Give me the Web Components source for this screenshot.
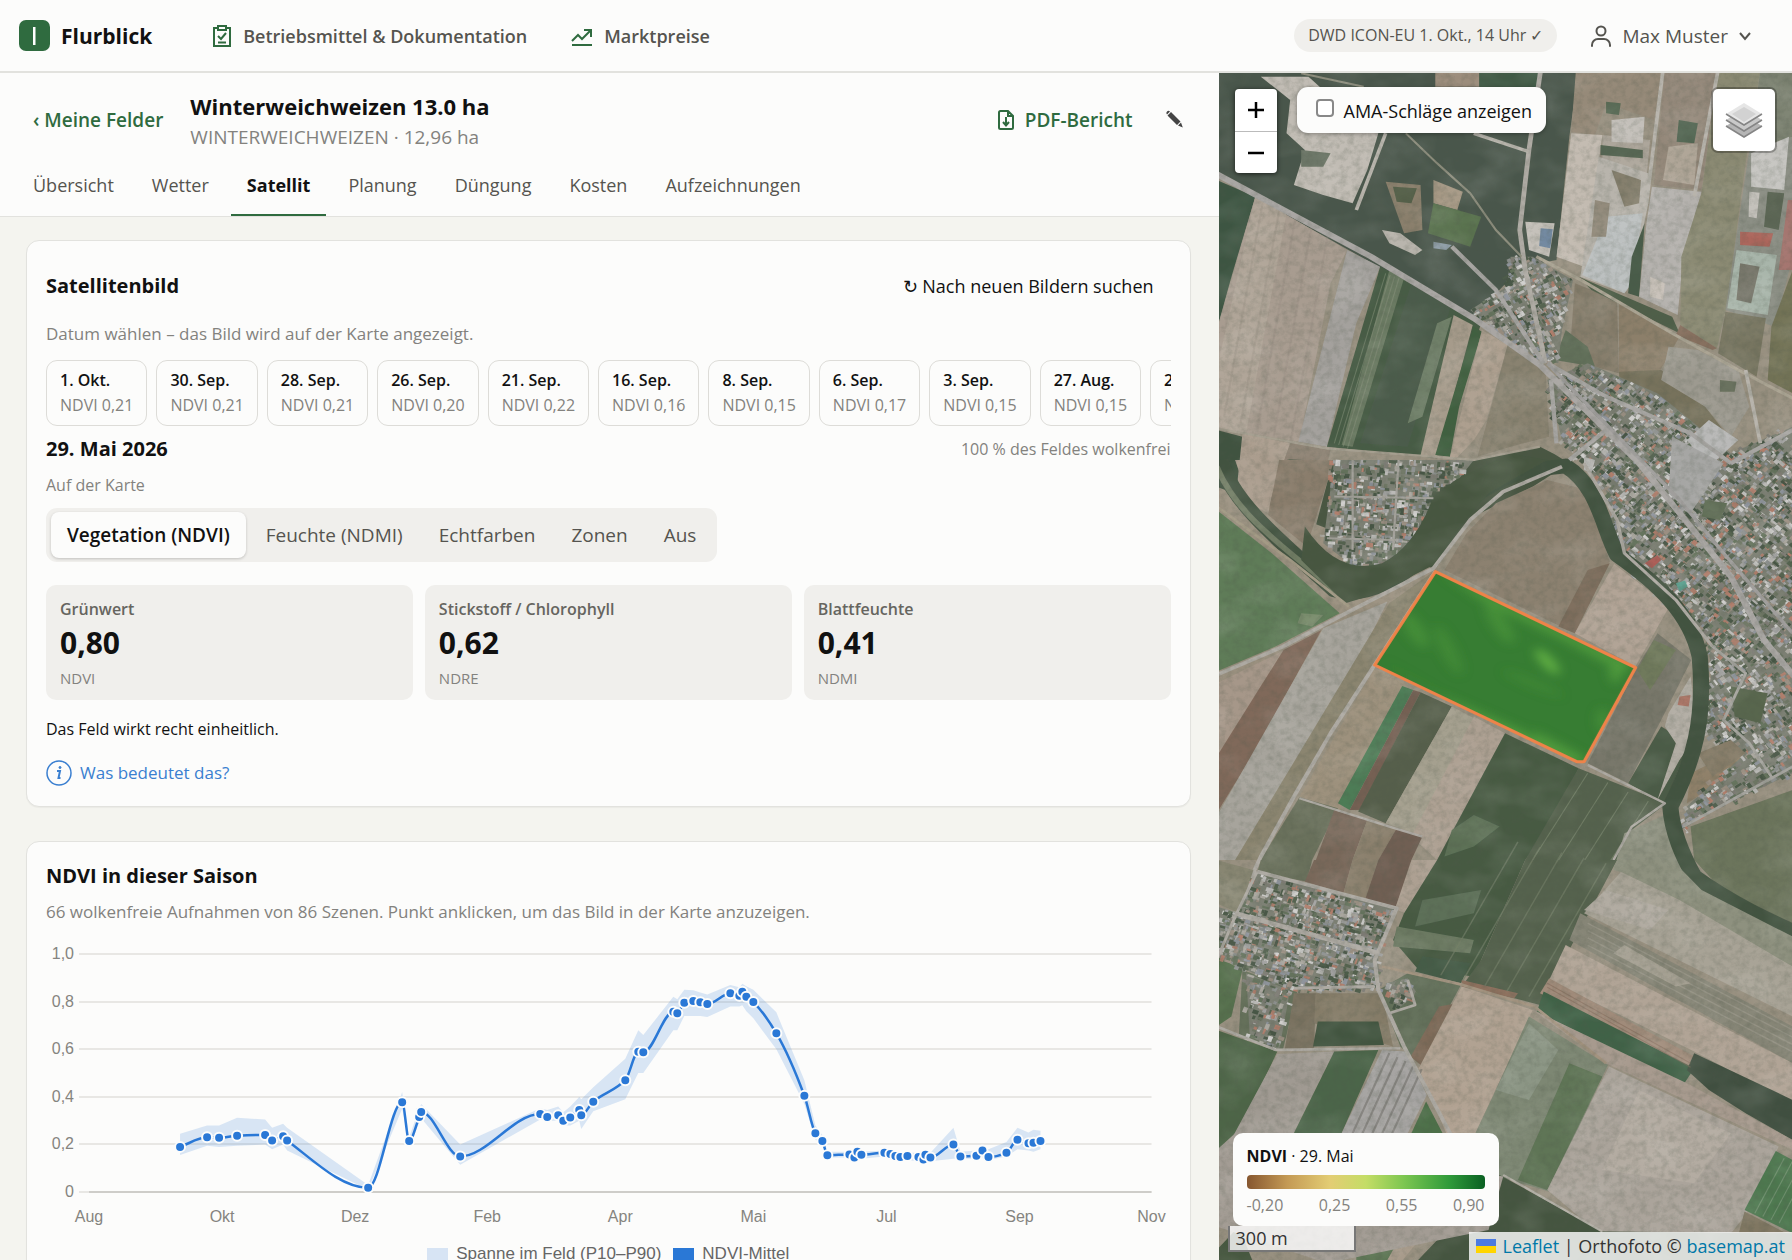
<!DOCTYPE html>
<html lang="de">
<head>
<meta charset="utf-8">
<meta name="viewport" content="width=device-width, initial-scale=1">
<title>Flurblick – Satellit</title>
<style>
  html, body { margin: 0; height: 100%; }
  body {
    font-family: "Open Sans", "Noto Sans", sans-serif;
    font-size: 18px; line-height: 24px; color: #111;
    background: #f4f4ef; overflow: hidden;
    --surface: #fcfcfb; --line: #e2e2de; --muted: #83827e; --mid: #55544f;
    --green: #2f6b3f; --blue: #3a7fd0; --tile: #f0efec;
  }
</style>
</head>
<body>
<flur-app></flur-app>

<script>
const base = `*{box-sizing:border-box}button,input{font:inherit;color:inherit}button{border:0;background:none;padding:0;cursor:pointer}a{text-decoration:none;color:inherit}svg{display:block;flex:none}h1,h2,h3,p,dl,dd,dt{margin:0;font-weight:inherit;font-size:inherit}`;

class Base extends HTMLElement {
  constructor() {
    super();
    const t = document.createElement('template');
    t.innerHTML = `<style>${base}${this.css()}</style>${this.html()}`;
    this.attachShadow({ mode: 'open' }).append(t.content.cloneNode(true));
  }
  css() { return ''; }
  html() { return '<slot></slot>'; }
}

/* ---------- header ---------- */
class AppHeader extends Base {
  css() { return `
    :host{display:flex;align-items:center;height:73px;flex:none;padding:0 40px 0 19px;background:var(--surface);border-bottom:2px solid var(--line);color:var(--mid)}
    .brand{display:flex;align-items:center;gap:11px;font-weight:700;font-size:21px;color:#111;margin-right:59px}
    nav{display:flex;gap:43px;flex:1;font-weight:600}
    nav a{display:flex;align-items:center;gap:10px}
    nav svg{color:var(--green)}
    .chip{background:var(--tile);border-radius:17px;padding:4px 14px 5px;font-size:16px;margin-right:33px}
    button{display:flex;align-items:center;gap:10px;font-size:19px}`; }
  html() { return `
    <a class="brand" href="#"><svg width="31" height="31" viewBox="0 0 31 31" aria-hidden="true"><rect width="31" height="31" rx="7" fill="#2f6b3f"/><rect x="14" y="7" width="2.5" height="18" fill="#fff"/></svg>Flurblick</a>
    <nav>
      <a href="#"><svg width="22" height="24" viewBox="0 0 22 24" fill="none" stroke="currentColor" stroke-width="2"><path d="M7 4H3v18h16V4h-4"/><rect x="7" y="2" width="8" height="4"/><path d="M7 12l3 3 5-6M7 18.500h8"/></svg>Betriebsmittel &amp; Dokumentation</a>
      <a href="#"><svg width="24" height="24" viewBox="0 0 24 24" fill="none" stroke="currentColor" stroke-width="2"><path d="M2 17l6-6 4 4 8-8M14 6h7v7M2 21h20"/></svg>Marktpreise</a>
    </nav>
    <span class="chip">DWD ICON-EU 1. Okt., 14 Uhr ✓</span>
    <button type="button"><svg width="22" height="24" viewBox="0 0 22 24" fill="none" stroke="currentColor" stroke-width="2" stroke-linecap="round"><circle cx="11" cy="7" r="4.500"/><path d="M2 22v-1a6 6 0 0 1 6-6h6a6 6 0 0 1 6 6v1"/></svg>Max Muster<svg width="14" height="14" viewBox="0 0 14 14" fill="none" stroke="currentColor" stroke-width="2"><path d="M2 4l5 6 5-6"/></svg></button>`; }
}
customElements.define('app-header', AppHeader);

/* ---------- field header with tabs ---------- */
class FieldHeader extends Base {
  css() { return `
    :host{display:block;background:var(--surface);border-bottom:1px solid var(--line)}
    .top{display:flex;align-items:center;padding:16px 34px 0 33px}
    .back,.pdf{color:var(--green);font-weight:600;font-size:19px}
    .titles{flex:1;margin-left:27px}
    h1{font-size:22px;line-height:34px;font-weight:700}
    .titles p{line-height:28px;color:var(--muted);font-size:19px}
    .pdf{display:flex;align-items:center;gap:10px;margin-right:32px}
    .tabs{display:flex;gap:6px;padding:0 17px}
    .tabs a{padding:22px 16px 17px;color:var(--mid);border-bottom:2px solid transparent}
    .tabs a[aria-current]{font-weight:700;color:#111;border-color:var(--green)}`; }
  html() { return `
    <div class="top">
      <a class="back" href="#">‹ Meine Felder</a>
      <div class="titles"><h1>Winterweichweizen 13.0 ha</h1><p>WINTERWEICHWEIZEN · 12,96 ha</p></div>
      <button class="pdf" type="button"><svg width="18" height="22" viewBox="0 0 18 22" fill="none" stroke="currentColor" stroke-width="2"><path d="M2 3.500A1.500 1.500 0 0 1 3.500 2H11l5 5v11.500a1.500 1.500 0 0 1-1.500 1.500h-11A1.500 1.500 0 0 1 2 18.500zM11 2v5h5M9 8v8M6 13l3 3.500 3-3.500"/></svg>PDF-Bericht</button>
      <button type="button" aria-label="Bearbeiten"><svg width="20" height="20" viewBox="0 0 20 20" fill="#444"><path d="M2.500 5.500l3.500-3.500 9.500 9.500-3.500 3.500zM13 15.500l3-3 1.800 5zM2 4.500a2 2 0 0 1 3-3z"/></svg></button>
    </div>
    <nav class="tabs"><a href="#">Übersicht</a><a href="#">Wetter</a><a href="#" aria-current="page">Satellit</a><a href="#">Planung</a><a href="#">Düngung</a><a href="#">Kosten</a><a href="#">Aufzeichnungen</a></nav>`; }
}
customElements.define('field-header', FieldHeader);

/* ---------- card ---------- */
class UiCard extends Base {
  css() { return `:host{display:block;background:var(--surface);border:1px solid var(--line);border-radius:13px;padding:20px 19px;box-shadow:0 1px 1px #0000000a}`; }
}
customElements.define('ui-card', UiCard);

/* ---------- scene picker ---------- */
class DateStrip extends Base {
  css() { return `
    :host{display:flex;gap:9px;overflow:hidden}
    button{flex:none;height:66px;padding:0 13px;border:1px solid #dddcd8;border-radius:11px;text-align:left;line-height:25px;font-size:16px;white-space:nowrap}
    b{display:block;font-weight:600}
    span{color:var(--muted)}`; }
  html() {
    return [['1. Okt.','0,21'],['30. Sep.','0,21'],['28. Sep.','0,21'],['26. Sep.','0,20'],['21. Sep.','0,22'],['16. Sep.','0,16'],['8. Sep.','0,15'],['6. Sep.','0,17'],['3. Sep.','0,15'],['27. Aug.','0,15'],['24. Aug.','0,15']]
      .map(([d, v]) => `<button type="button"><b>${d}</b><span>NDVI ${v}</span></button>`).join('');
  }
}
customElements.define('date-strip', DateStrip);

/* ---------- layer switch ---------- */
class LayerSwitch extends Base {
  css() { return `
    :host{display:inline-flex;gap:4px;padding:4px 5px;border-radius:11px;background:var(--tile)}
    button{height:46px;padding:0 16px;border-radius:8px;color:var(--mid);font-size:19px}
    button[aria-pressed=true]{background:var(--surface);color:#111;font-weight:600;box-shadow:0 1px 3px #0003}`; }
  html() { return ['Vegetation (NDVI)','Feuchte (NDMI)','Echtfarben','Zonen','Aus'].map((t, i) => `<button type="button" aria-pressed="${i === 0}">${t}</button>`).join(''); }
}
customElements.define('layer-switch', LayerSwitch);

/* ---------- metric ---------- */
class MetricTile extends Base {
  css() { return `
    :host{display:block;background:var(--tile);border-radius:10px;padding:12px 14px 8px}
    .l{font-size:16px;font-weight:600;color:#66655f;line-height:24px}
    .v{font-size:30px;font-weight:700;line-height:44px}
    .c{font-size:15px;color:var(--muted);line-height:27px}`; }
  html() { return `<div class="l"><slot name="label"></slot></div><div class="v"><slot></slot></div><div class="c"><slot name="code"></slot></div>`; }
}
customElements.define('metric-tile', MetricTile);

/* ---------- season chart ---------- */
/* x, mean, P90, P10 */
const season = [[134,.19,.245,.156],[161,.23,.28,.195],[173,.228,.28,.19],[191,.237,.312,.195],[219,.24,.305,.2],[226,.217,.27,.18],[237,.235,.287,.2],[241,.217,.27,.175],[322,.018,.03,.01],[356,.377,.42,.35],[363,.215,.23,.2],[373,.315,.35,.29],[375,.337,.37,.31],[414,.15,.2,.115],[494,.328,.352,.305],[501,.315,.345,.3],[512,.323,.36,.3],[517,.3,.335,.28],[524,.313,.36,.28],[533,.345,.4,.3],[535,.323,.39,.265],[547,.38,.44,.34],[579,.47,.56,.39],[592,.59,.68,.5],[597,.587,.66,.5],[627,.757,.82,.68],[631,.751,.81,.68],[638,.795,.85,.74],[647,.803,.848,.74],[654,.797,.838,.74],[661,.79,.83,.735],[684,.835,.87,.78],[693,.825,.86,.78],[696,.842,.875,.785],[700,.82,.865,.76],[707,.798,.85,.73],[730,.667,.755,.6],[758,.405,.47,.37],[769,.247,.28,.22],[776,.215,.24,.2],[781,.155,.17,.145],[803,.158,.17,.145],[808,.145,.17,.135],[811,.17,.18,.14],[815,.157,.17,.14],[838,.165,.175,.15],[844,.16,.175,.145],[849,.152,.17,.14],[854,.148,.165,.135],[861,.152,.165,.135],[872,.148,.165,.13],[877,.137,.165,.13],[879,.157,.165,.13],[884,.145,.165,.13],[907,.2,.27,.14],[914,.15,.17,.14],[930,.153,.175,.14],[936,.175,.2,.145],[942,.147,.18,.135],[960,.165,.21,.15],[971,.22,.27,.18],[982,.205,.25,.175],[987,.207,.262,.17],[994,.215,.258,.18]];
const yOf = v => 258 - v * 238;
function smooth(p) {
  const n = p.length, d = [], m = [];
  for (let i = 0; i < n - 1; i++) d.push((p[i+1][1] - p[i][1]) / (p[i+1][0] - p[i][0]));
  for (let i = 0; i < n; i++) m.push(i === 0 ? d[0] : i === n - 1 ? d[n-2] : d[i-1] * d[i] <= 0 ? 0 : 2 * d[i-1] * d[i] / (d[i-1] + d[i]));
  let s = '';
  for (let i = 0; i < n - 1; i++) {
    const h = (p[i+1][0] - p[i][0]) / 3;
    s += `C${p[i][0] + h} ${p[i][1] + m[i] * h} ${p[i+1][0] - h} ${p[i+1][1] - m[i+1] * h} ${p[i+1][0]} ${p[i+1][1]}`;
  }
  return s;
}
class NdviChart extends Base {
  css() { return `
    :host{display:block;font-family:"Liberation Sans",Arial,sans-serif;color:#666}
    svg{width:100%;height:auto}
    text{font-size:16px;fill:#85847f}
    ul{display:flex;justify-content:center;gap:12px;margin:0;padding:8px 0 0;list-style:none;font-size:17px}
    li{display:flex;align-items:center;gap:8px}
    i{width:21px;height:12px;background:#d7e4f4}
    i.m{background:#2a78d6}`; }
  html() {
    const pts = season.map(r => [r[0], yOf(r[1])]);
    const up = season.map(r => [r[0], yOf(r[2])]), lo = season.map(r => [r[0], yOf(r[3])]);
    const band = 'M' + up.concat(lo.reverse()).map(a => a.join(' ')).join('L') + 'Z';
    const grid = ['0','0,2','0,4','0,6','0,8','1,0'].map((t, i) => { const y = Math.round(yOf(i / 5)); return `<path d="M33 ${y}H1105" stroke="#e2e1dd" stroke-width="1.500"/><text x="28" y="${y + 5}" text-anchor="end">${t}</text>`; }).join('');
    const months = ['Aug','Okt','Dez','Feb','Apr','Mai','Jul','Sep','Nov'].map((t, i) => `<text x="${43 + Math.round(i * 132.8)}" y="288" text-anchor="middle">${t}</text>`).join('');
    return `<svg viewBox="0 0 1124 300" role="img" aria-label="NDVI-Verlauf" style="overflow:visible">${grid}
      <path d="M43 258H1105" stroke="#c6c5c1" stroke-width="1.500"/>
      <path d="${band}" fill="#2a78d6" fill-opacity=".17"/>
      <path d="M${pts[0].join(' ')}${smooth(pts)}" fill="none" stroke="#2a78d6" stroke-width="2.500"/>
      <g fill="#2a78d6" stroke="#fcfcfb" stroke-width="2">${pts.map(p => `<circle cx="${p[0]}" cy="${p[1]}" r="5"/>`).join('')}</g>${months}</svg>
      <ul><li><i></i>Spanne im Feld (P10–P90)</li><li><i class="m"></i>NDVI-Mittel</li></ul>`;
  }
}
customElements.define('ndvi-chart', NdviChart);

/* ---------- orthophoto ---------- */
let seed = 7;
const rnd = () => (seed = (seed * 16807) % 2147483647) / 2147483647;
const inside = (x, y, p) => { let c = false; for (let i = 0, j = p.length - 1; i < p.length; j = i++) if ((p[i][1] > y) !== (p[j][1] > y) && x < (p[j][0] - p[i][0]) * (y - p[i][1]) / (p[j][1] - p[i][1]) + p[i][0]) c = !c; return c; };
const P = s => s.split(' ').map(q => q.split(',').map(Number));
function village(str, n, ang) {
  const p = P(str), xs = p.map(a => a[0]), ys = p.map(a => a[1]);
  const x0 = Math.min(...xs), x1 = Math.max(...xs), y0 = Math.min(...ys), y1 = Math.max(...ys);
  const col = ['#b9b8b5','#a3a3a2','#8d908e','#cfcecc','#4d5b4a','#55634f','#465544','#6d7563','#9b8f82','#b07e6c','#8f949c','#aaa79f','#7e7c74','#65735d'];
  let s = `<polygon points="${str}" fill="#7b7f73"/>`;
  for (let i = 0; i < n * 2; i++) {
    const x = x0 + rnd() * (x1 - x0), y = y0 + rnd() * (y1 - y0);
    if (!inside(x, y, p)) continue;
    const w = 6 + rnd() * 15, h = 6 + rnd() * 8;
    s += `<rect x="${x | 0}" y="${y | 0}" width="${w | 0}" height="${h | 0}" fill="${col[rnd() * col.length | 0]}" transform="rotate(${ang + (rnd() > .5 ? 90 : 0)} ${x | 0} ${y | 0})"/>`;
  }
  return s;
}
const poly = list => list.map(([f, p]) => `<polygon fill="${f}" points="${p}"/>`).join('');
const road = (d, w = 11, c = '#aeaaa3') => `<path d="${d}" fill="none" stroke="${c}" stroke-width="${w}" stroke-linejoin="round"/>`;
const lines = (x0, y0, x1, y1, dx, dy, n, c, w, o = .5) => Array.from({ length: n }, (_, i) => `<path d="M${x0 + dx * i} ${y0 + dy * i}L${x1 + dx * i} ${y1 + dy * i}" stroke="${c}" stroke-width="${w}" opacity="${o}"/>`).join('');

const north = () => poly([
  ['#4a574b','0,0 985,0 960,200 925,570 830,590 700,740 440,590 100,380 0,310'],
  ['#c1bcb4','120,20 250,20 330,100 440,190 410,300 370,400 290,375 210,345 240,240 190,190 200,90'],
  ['#6d7767','230,240 310,250 290,290 230,290'],
  ['#9c8d7c','595,0 715,0 715,50 595,50'],['#3f5a45','715,0 878,0 872,70 715,50'],
  ['#8a7f6c','460,335 555,345 560,480 510,490'],['#546049','480,350 545,355 530,400 490,395'],
  ['#a49682','590,330 670,365 655,420 590,400'],['#5a7350','590,400 720,440 690,530 575,490'],
  ['#b9b5ad','450,480 500,490 560,540 540,555 470,520'],['#8797a2','590,515 640,525 625,540 590,535'],
  ['#c3bfb8','840,455 920,460 905,560 850,540'],['#7188a0','882,475 915,478 908,535 878,528'],
  ['#968a79','978,0 1215,0 1190,150 1060,100 1030,195 965,185'],['#586a54','1060,95 1100,100 1095,135 1060,130'],
  ['#c3bbb1','965,190 1050,195 1025,400 1000,590 925,560'],
  ['#ada69b','1050,195 1180,210 1170,320 1050,270'],['#c2beb8','1075,150 1165,140 1160,220 1075,215'],
  ['#566652','1045,225 1160,240 1160,265 1045,255'],
  ['#b8b4ac','1040,260 1175,310 1175,400 1130,640 1110,670 990,620'],['#bcc0c0','1060,440 1160,430 1130,640 1110,670 995,615'],
  ['#857f6d','1075,300 1155,330 1150,400 1110,410'],['#938b7b','1030,390 1070,400 1060,500 1020,500'],
  ['#4a5c49','1130,560 1165,460 1150,680 1120,670'],
  ['#b5b2ae','1185,350 1320,365 1270,560 1255,735 1150,680 1170,460'],['#c9c2ba','1180,620 1220,640 1215,690 1180,680'],
  ['#94887a','1220,0 1365,0 1320,360 1190,345'],['#4f6450','1258,150 1310,160 1300,220 1252,215'],['#b0a698','1230,230 1310,220 1300,345 1215,330'],
  ['#8b8a73','1365,0 1480,0 1445,240 1425,400 1390,700 1362,835 1262,765 1265,560 1320,370'],
  ['#7c8271','1480,0 1568,0 1568,200 1450,240'],['#8c8f85','1450,240 1568,200 1568,560 1520,770 1385,720 1420,460'],
  ['#c6c5c1','1455,250 1558,200 1545,360 1455,350'],['#5b6654','1500,365 1545,370 1530,480 1490,470'],['#c3c0ba','1450,365 1478,368 1470,445 1448,440'],
  ['#ac665c','1425,485 1515,490 1505,530 1425,525'],['#a5766f','1555,390 1568,390 1568,600 1530,600'],
  ['#a8b5aa','1415,540 1525,555 1500,735 1390,715'],['#77766a','1425,580 1478,590 1455,700 1415,690'],
  ['#777560','1385,725 1495,745 1470,920 1365,850'],['#737357','1510,770 1568,600 1568,970 1500,930'],
  ['#857c6b','975,640 1090,690 1095,910 960,870'],['#8c7f6b','1095,695 1260,800 1200,915 1095,910'],
  ['#4f5f49','985,620 1240,740 1260,790 1020,660'],['#87705f','1262,765 1362,835 1350,840 1250,795'],
  ['#77725c','1095,905 1210,900 1330,1010 1400,1110 1300,1080 1100,990'],
  ['#9d9a90','1230,830 1310,840 1420,900 1450,1010 1400,1100 1330,1010 1210,930'],['#6b725e','1370,930 1415,935 1410,965 1370,965'],
  ['#62705a','950,780 1010,830 1030,890 920,870'],
  ['#3d5543','0,330 105,380 40,620 0,780'],['#a89c90','105,380 355,540 310,640 225,1115 0,1075 0,780'],
  ['#b0a598','105,380 190,430 80,1090 0,1075 0,900'],['#a4a19d','355,540 445,590 380,760 300,1130 222,1115'],
  ['#465c44','445,590 720,760 600,1165 300,1130'],['#6b7a62','470,600 510,625 370,1130 340,1125'],['#4c5b4b','530,640 640,700 520,1130 390,1120'],
  ['#708069','600,760 640,740 560,1040 520,1060'],['#a69b8b','645,735 697,765 600,1165 555,1155'],['#40603f','700,770 722,785 660,1010 635,1160 595,1155'],
  ['#ad9f8f','722,780 792,825 735,1050 700,1110 650,1168 635,1160'],['#898270','792,825 895,895 905,1100 800,1130 710,1160 740,1040'],
  ['#3f5240','0,1080 70,1100 60,1250 0,1300'],['#ab9d8e','70,1090 200,1120 130,1340 55,1250'],['#8b7f70','200,1120 310,1140 245,1430 130,1340'],
]) + lines(125, 400, 20, 1040, 45, 20, 5, '#958b80', 6, .3) + lines(460, 610, 320, 1120, 12, 5, 4, '#8a947f', 3, .5)
  + `<path d="M190 1168Q420 1180 620 1190L880 1130Q920 1150 960 1180L860 1250 700 1340 600 1490 450 1580 330 1600 250 1450 310 1200Z" fill="#485743"/>`
  + village('800,560 860,560 970,630 940,780 930,880 880,870 690,720 790,650', 420, 60);

const middle = () => `<g transform="translate(0 1170)">` + poly([
  ['#9a907f','0,80 600,330 480,600 0,700'],
  ['#ab9d8e','50,0 170,0 140,160 90,130'],['#8a7d6c','170,0 320,0 245,260 140,165'],
  ['#5f7c59','0,150 150,280 335,460 160,560 0,635'],['#7a8d6d','230,460 290,465 260,500 220,490'],
  ['#8c8170','900,60 990,85 1030,170 1070,305 975,520 620,330 680,220 760,130'],['#7d6d5c','1010,330 1070,310 975,520 930,500'],
  ['#b0a294','1082,312 1232,440 1140,620 975,520'],
  ['#a69789','0,670 185,570 60,850 0,900'],['#80695a','182,570 285,510 100,880 0,1060 0,890'],
  ['#a7a49c','290,505 465,425 350,680 60,1200 0,1200 0,1070'],['#8b8570','470,430 590,335 430,610 190,1050 110,1200 50,1200'],
  ['#9d917d','430,625 515,672 335,1050 225,1010'],['#4d7c56','505,678 535,690 362,1050 330,1030'],
  ['#756153','535,690 555,697 390,1050 362,1050'],['#565f4c','555,697 640,740 460,1090 385,1055'],
  ['#a5a08f','640,740 700,775 540,1120 460,1090'],['#ada092','700,770 785,820 600,1200 530,1130'],
  ['#6b715c','225,1012 330,1045 260,1200 120,1200'],['#79675a','320,1050 410,1080 370,1200 270,1200'],['#8a7f6c','410,1080 490,1105 440,1200 370,1200'],['#705f52','490,1105 560,1130 530,1200 440,1200'],
  ['#465a43','785,820 985,925 940,1050 840,1200 600,1200'],['#5d7157','640,1110 700,1065 770,1100 700,1160 620,1190'],
  ['#55624d','985,925 1225,1030 1130,1110 1090,1200 840,1200'],
  ['#78776a','1140,630 1200,520 1292,600 1210,780 1120,970 1010,910'],['#6f7a5b','1145,630 1190,540 1250,570 1180,690'],
  ['#4c5b46','1210,800 1285,850 1220,1035 1120,970'],['#b2ada4','1230,760 1290,650 1310,820 1260,900 1200,1020 1250,850 1220,800'],
  ['#8f8069','1290,940 1400,880 1440,900 1370,970 1280,1030'],['#6c745c','1290,1100 1568,990 1568,1400 1400,1320 1300,1200'],
  ['#8e9180','1110,1120 1230,1060 1250,1180 1320,1300 1080,1230'],
]) + lines(1010, 940, 860, 1200, 55, 28, 4, '#7d8871', 3, .7)
  + village('320,0 700,0 650,70 590,80 560,240 480,320 390,335 290,250', 620, 5)
  + village('1000,10 940,-60 900,-240 1010,-290 1200,-200 1400,-20 1568,-100 1568,420 1568,620 1350,640 1330,520 1100,300 1060,90', 3200, 42)
  + village('1350,600 1568,620 1568,940 1330,1060 1270,1110 1280,1040 1430,890 1330,820', 620, 55)
  + poly([['#c3c3c3','1240,15 1290,20 1260,70 1235,60'],['#b9b8b5','1000,-10 1030,0 1020,40 1000,30'],['#b9b9b8','1280,-60 1340,-120 1420,-60 1340,20'],['#a6a6a4','1240,-70 1380,10 1290,160 1230,100'],['#5ba08f','1250,370 1275,362 1282,380 1260,395'],['#ad5c55','1165,310 1200,285 1210,300 1185,325'],['#ab7466','1260,710 1290,705 1285,740 1255,735'],['#59664e','1400,680 1500,700 1480,790 1410,770'],['#616e56','1330,120 1390,130 1370,180 1320,170'],['#867c68','1310,880 1400,840 1440,880 1350,950']])
  + road('M10 0C40 130 180 250 320 390 C400 420 520 350 585 260 C640 150 720 70 850 30 L950 18 C1040 80 1050 200 1090 285 C1200 370 1290 460 1315 590 C1330 780 1300 900 1235 1040 C1240 1120 1270 1190 1300 1250 C1400 1330 1500 1380 1600 1430', 44, '#435341')
  + road('M0 20C60 180 200 270 330 400', 16, '#6f7b63')
  + `<path d="M240 200Q330 350 450 310 540 260 590 110L650 60 800 -20 900 0 740 100Q640 220 600 310L440 400 350 430 230 300Z" fill="#465641"/>`
  + road('M0 140L200 300 360 440', 8, '#a39a85') + road('M0 645L180 560 360 455 590 325 690 180 780 95 940 20') + road('M595 335L430 615 310 820 210 1010 120 1190 40 1380')
  + road('M225 1015L470 1100 560 1130', 7) + road('M1010 915L1220 1030 1130 1100 1080 1200', 7)
  + road('M370 0L370 270M495 0L480 270M320 110L590 115M300 235L490 240', 6, '#a3a19a')
  + road('M1000 10L1090 180 1110 280 1250 420 1350 560', 9) + road('M1350 560L1440 640 1380 780 1450 850 1510 950M1270 1100L1568 920', 8, '#a5a49e') + '</g>';

const south = () => `<g transform="translate(0 2340)">` + poly([
  ['#888672','0,30 100,60 60,190 0,160'],['#6b715c','120,30 260,30 245,95 110,70'],['#79675a','265,30 370,30 345,130 240,95'],['#8a7f6c','370,30 440,30 405,145 345,130'],['#705f52','440,30 535,30 485,178 405,145'],['#ada092','530,30 605,30 515,190 485,178'],
  ['#465a43','600,30 840,30 700,380 550,360 480,270 510,190'],['#5d7058','560,150 720,120 700,190 540,230'],['#6c7a62','490,230 700,270 690,310 480,290'],
  ['#55624d','840,30 1090,30 880,465 670,405 720,330'],['#455b47','560,320 690,340 665,400 540,365'],
  ['#64705a','440,420 520,370 665,405 550,640 500,590'],['#7e6a58','605,470 655,460 560,650 528,620'],['#b1a292','667,410 860,480 700,860 625,850 550,655'],
  ['#8d6f5d','667,390 820,430 810,445 667,410'],
  ['#56704e','0,320 70,360 40,500 0,530'],['#65705a','70,360 220,420 180,600 60,560'],['#7a7260','210,430 270,430 265,600 185,600'],['#857b68','270,430 450,430 480,590 265,520'],['#43553f','275,515 440,515 455,585 262,590'],
  ['#4d6546','0,540 165,605 60,850 0,960'],['#a09a92','165,612 320,605 210,850 60,850 0,1020 0,950'],['#4b6548','320,605 440,600 340,850 210,850'],
  ['#a6a4a2','450,600 515,605 572,735 520,850 340,850'],['#4d7048','570,755 615,850 530,850'],
  ['#a8a396','1105,60 1260,140 1568,340 1568,500 1000,190'],['#8e917f','1090,30 1240,30 1320,120 1568,260 1568,350 1260,150 1080,55'],
  ['#b0aaa0','1060,120 1230,180 1180,240 1000,180'],['#868576','990,190 1568,530 1568,640 960,270'],['#a39e90','1110,285 1290,400 1250,410 1080,310'],
  ['#b1a496','950,285 1568,640 1568,760 1300,605 905,390'],['#a08b7a','905,385 1300,620 1290,655 880,430'],
  ['#3f6246','890,425 1300,655 1270,705 872,485'],['#415040','1300,610 1568,750 1568,870 1440,790 1340,720 1280,660'],
  ['#a79a8e','860,480 1280,700 1568,870 1568,900 1060,640'],
  ['#7d8773','850,500 1065,645 905,1025 765,980 700,860 760,720'],['#5f7456','960,640 1050,680 900,1020 820,990'],['#8c9685','850,520 930,600 850,750 760,720'],
  ['#aba49b','1068,650 1530,890 1440,1095 1400,1150 1040,1150 900,1020'],['#b4aca2','1150,720 1400,850 1300,1000 1050,960'],
  ['#4d7850','1522,903 1568,930 1568,1150 1437,1080'],['#807762','1437,1085 1568,1160 1568,1240 1400,1240'],
  ['#44543f','770,975 1050,1145 1568,1150 1568,1240 540,1240'],['#46583f','0,1200 60,1130 100,1240 0,1240'],['#5c7553','380,1120 520,1130 460,1240 380,1240'],['#a79a8a','520,1120 580,1130 500,1240 460,1240'],
  ['#a39c94','0,900 60,840 780,980 740,1140 300,1240 0,1130'],
]) + lines(1060, 40, 850, 440, -60, -16, 5, '#727d66', 4, .7) + lines(470, 610, 370, 850, 22, 12, 5, '#716f6a', 6, .6) + lines(1545, 925, 1465, 1090, 22, 10, 4, '#7d9a79', 3, .7)
  + lines(900, 400, 1290, 640, 0, 12, 2, '#7f6656', 3, .5) + lines(1010, 220, 1568, 540, 0, 22, 4, '#a39f92', 4, .5)
  + village('110,65 490,175 440,300 440,415 200,420 0,320 0,170 60,190', 950, 18)
  + village('80,370 200,420 170,600 90,560', 90, 20) + village('460,400 520,385 545,430 490,480', 40, 20)
  + road('M50 190L440 310', 14) + road('M110 65L490 175 430 330 440 420 510 590 640 860') + road('M110 65L50 200 0 330', 8) + road('M0 530L160 600 500 595', 8) + road('M210 415L430 410', 9) + road('M450 350L670 405 865 470 1060 640', 8, '#a3937f') + road('M470 490L540 465 520 390', 8) + road('M780 975L1050 1145', 6, '#b5b1a8') + '</g>';

class FieldMap extends Base {
  css() { return `
    :host{display:block;position:relative;overflow:hidden;background:#8d8878}
    .photo{position:absolute;inset:0;width:100%;height:100%}
    .ctl{position:absolute;background:#fff}
    .zoom{left:16px;top:16px;width:42px;border-radius:4px;box-shadow:0 1px 5px #000a;display:grid;overflow:hidden}
    .zoom button{height:42px;display:grid;place-items:center}
    .zoom button+button{border-top:1px solid #bbb}
    .ama{left:78px;top:14px;display:flex;align-items:center;gap:10px;height:46px;padding:2px 14px 0 19px;border-radius:11px;background:var(--surface);box-shadow:0 1px 4px #0005}
    .ama input{appearance:none;width:18px;height:18px;margin:0 0 6px;border:2px solid #888;border-radius:4px;background:#fff}
    .layers{right:17px;top:16px;width:62px;height:62px;display:grid;place-items:center;border-radius:5px;box-shadow:0 0 0 2px #0004}
    .legend{left:14px;bottom:34px;width:266px;padding:11px 14px 9px;border-radius:10px;background:var(--surface);font-size:16px}
    .bar{height:14px;border-radius:4px;margin:7px 0 4px;background:linear-gradient(90deg,#86562f,#c49a55 17%,#e3cd74 35%,#c4dd66 50%,#7cc650 66%,#2f9a3a 85%,#0a6022)}
    .vals{display:flex;justify-content:space-between;color:var(--muted)}
    .scale{left:9px;bottom:8px;width:128px;height:26px;padding-left:6px;border:2px solid #777;border-top:0;background:#fffc;color:#333}
    .attr{right:0;bottom:0;display:flex;align-items:center;gap:6px;height:28px;padding:0 7px;background:#fffc;color:#333}
    .attr a{color:#0078a8}`; }
  html() {
    return `
    <svg class="photo" viewBox="0 0 574 1187" preserveAspectRatio="xMidYMid slice" role="img" aria-label="Luftbild mit Feld">
      <defs>
        <filter id="grain" x="0" y="0" width="100%" height="100%"><feTurbulence type="fractalNoise" baseFrequency=".14 .16" numOctaves="4" seed="4"/><feColorMatrix values="0 0 0 0 .08  0 0 0 0 .1  0 0 0 0 .07  1.6 0 0 0 -.62"/></filter>
        <filter id="haze" x="0" y="0" width="100%" height="100%"><feTurbulence type="fractalNoise" baseFrequency=".02 .03" numOctaves="3" seed="9"/><feColorMatrix values="0 0 0 0 .85  0 0 0 0 .84  0 0 0 0 .8  0 1.4 0 0 -.6"/></filter>
        <filter id="photo"><feGaussianBlur stdDeviation=".7"/></filter>
        <filter id="soft" x="-50%" y="-50%" width="200%" height="200%"><feGaussianBlur stdDeviation="14"/></filter>
        <clipPath id="field"><polygon points="595,1505 1140,1793 1000,2075 980,2075 430,1785"/></clipPath>
      </defs>
      <g filter="url(#photo)"><g transform="translate(-2 -3) scale(.3673 .3333)">
        <rect width="1600" height="3600" fill="#989080"/>
        ${north()}${middle()}${south()}
        ${road('M882 0L850 240 825 480 840 600 895 880', 13)}
        ${road('M0 312L420 560 700 745 880 885 1060 1080 1150 1180 1290 1370 1400 1520 1490 1710 1580 1830', 17, '#a9a6a3')}
        ${road('M900 880L1060 980 1290 1090 1400 1180M640 530L760 660 890 880M1060 1080L960 1170M1400 1180L1568 1080M910 930L925 1120', 12, '#a7a5a2')}
        ${road('M905 885L1075 1080 1260 1290 1380 1450 1568 1690', 10, '#a09e9c')}
        ${road('M870 560L1000 635 1240 790 1420 900 1568 985', 9, '#aca594')}
        ${road('M700 190L850 245M460 190L380 420M1215 0L1170 400M1365 0L1300 380M1440 900L1480 1120', 10, '#b8b4ac')}
        ${road('M230 10L400 50M515 190L600 280 690 370 760 480 830 560', 6, '#8e8e7e')}
        ${road('M0 1075L300 1135 700 1170 880 1130', 7, '#a59e8f')}
      </g></g>
      <rect width="574" height="1187" filter="url(#haze)" opacity=".2"/>
      <rect width="574" height="1187" filter="url(#grain)" opacity=".3"/>
      <g transform="translate(-2 -3) scale(.3673 .3333)">
        <g clip-path="url(#field)"><rect x="400" y="1480" width="780" height="620" fill="#377d33"/>
          <g fill="#4f9a3c" filter="url(#soft)"><path d="M610 1505L1130 1780 1110 1810 960 1720 830 1650 720 1590z"/><ellipse cx="540" cy="1680" rx="22" ry="60" transform="rotate(-30 540 1680)" opacity=".6"/><ellipse cx="630" cy="1740" rx="20" ry="80" transform="rotate(-25 630 1740)" opacity=".45"/><ellipse cx="900" cy="1775" rx="16" ry="48" transform="rotate(-40 900 1775)" fill="#62b044"/><ellipse cx="770" cy="1660" rx="22" ry="70" transform="rotate(-30 770 1660)" opacity=".6"/><path d="M440 1760L600 1870 820 1975 1000 2080 860 2060z"/><path d="M860 1980L1000 2060 990 2090 900 2060z"/><ellipse cx="1050" cy="1950" rx="16" ry="36" opacity=".6"/><ellipse cx="1085" cy="1800" rx="16" ry="40"/><ellipse cx="860" cy="1840" rx="90" ry="14" opacity=".3" transform="rotate(25 860 1840)"/></g></g>
        <polygon points="595,1505 1140,1793 1000,2075 980,2075 430,1785" fill="none" stroke="#ee8349" stroke-width="9" stroke-linejoin="round"/>
      </g>
    </svg>
    <div class="ctl zoom"><button type="button" aria-label="Vergrößern"><svg width="18" height="18" viewBox="0 0 18 18"><path d="M1 9h16M9 1v16" stroke="#000" stroke-width="2.500"/></svg></button><button type="button" aria-label="Verkleinern"><svg width="18" height="18" viewBox="0 0 18 18"><path d="M1 9h16" stroke="#000" stroke-width="2.500"/></svg></button></div>
    <label class="ctl ama" for="ama"><input type="checkbox" id="ama">AMA-Schläge anzeigen</label>
    <button class="ctl layers" type="button" aria-label="Ebenen"><svg width="38" height="38" viewBox="0 0 38 38"><path d="M1 25L19 14l18 11-18 11z" fill="#b5b5b5"/><path d="M1 25l18 11 18-11" fill="none" stroke="#858585" stroke-width="1.500"/><path d="M1 19L19 8l18 11-18 11z" fill="#c9c9c9"/><path d="M1 19l18 11 18-11" fill="none" stroke="#858585" stroke-width="1.500"/><path d="M1 13L19 2l18 11-18 11z" fill="#e6e6e6"/><path d="M7 13l12-7 12 7-12 8z" fill="#d2d2d2"/><path d="M1 13l18 11 18-11" fill="none" stroke="#858585" stroke-width="1.500"/></svg></button>
    <div class="ctl legend"><div><b>NDVI</b> · 29. Mai</div><div class="bar"></div><div class="vals"><span>-0,20</span><span>0,25</span><span>0,55</span><span>0,90</span></div></div>
    <div class="ctl scale">300 m</div>
    <div class="ctl attr"><svg width="20" height="14" viewBox="0 0 20 14"><path fill="#4c7be1" d="M0 0h20v7H0z"/><path fill="#ffd500" d="M0 7h20v7H0z"/></svg><span><a href="#">Leaflet</a> | Orthofoto © <a href="#">basemap.at</a></span></div>`;
  }
}
customElements.define('field-map', FieldMap);

/* ---------- page ---------- */
class FlurApp extends Base {
  css() { return `
    :host{display:flex;flex-direction:column;height:100vh}
    main{display:grid;grid-template-columns:minmax(0,17fr) 8fr;flex:1;min-height:0}
    .panel{overflow:hidden;min-width:0}
    .cards{display:flex;flex-direction:column;gap:34px;padding:23px 28px 24px 26px}
    .row{display:flex;justify-content:space-between;align-items:center}
    h2{font-size:20px;font-weight:700;line-height:28px}
    .head{height:50px}
    .head button{padding:0 17px}
    .hint{color:var(--muted);font-size:17px}
    date-strip{margin:14px 0 9px}
    .pick{margin-top:11px}
    .cloud{font-size:16px;color:var(--muted)}
    .cap{font-size:16px;color:var(--muted);margin:10px 0 11px}
    .tiles{display:grid;grid-template-columns:repeat(3,1fr);gap:12px;margin:23px 0 17px}
    .note{font-size:16px}
    .info{display:flex;width:fit-content;align-items:center;gap:8px;margin-top:19px;color:var(--blue);font-size:17px}
    .sub{margin:10px 0}
    layer-switch{vertical-align:top}`; }
  html() { return `
    <app-header></app-header>
    <main>
      <section class="panel">
        <field-header></field-header>
        <div class="cards">
          <ui-card>
            <div class="row head"><h2>Satellitenbild</h2><button type="button">↻ Nach neuen Bildern suchen</button></div>
            <p class="hint pick">Datum wählen – das Bild wird auf der Karte angezeigt.</p>
            <date-strip></date-strip>
            <div class="row"><h2>29. Mai 2026</h2><span class="cloud">100 % des Feldes wolkenfrei</span></div>
            <p class="cap">Auf der Karte</p>
            <layer-switch></layer-switch>
            <div class="tiles">
              <metric-tile><span slot="label">Grünwert</span>0,80<span slot="code">NDVI</span></metric-tile>
              <metric-tile><span slot="label">Stickstoff / Chlorophyll</span>0,62<span slot="code">NDRE</span></metric-tile>
              <metric-tile><span slot="label">Blattfeuchte</span>0,41<span slot="code">NDMI</span></metric-tile>
            </div>
            <p class="note">Das Feld wirkt recht einheitlich.</p>
            <a class="info" href="#"><svg width="26" height="26" viewBox="0 0 26 26" fill="none" stroke="currentColor" aria-hidden="true"><circle cx="13" cy="13" r="12" stroke-width="1.500"/><path d="M11 11h3l-1.500 7h2" stroke-width="2"/><circle cx="14" cy="7.500" r="1" fill="currentColor"/></svg>Was bedeutet das?</a>
          </ui-card>
          <ui-card>
            <h2>NDVI in dieser Saison</h2>
            <p class="hint sub">66 wolkenfreie Aufnahmen von 86 Szenen. Punkt anklicken, um das Bild in der Karte anzuzeigen.</p>
            <ndvi-chart></ndvi-chart>
          </ui-card>
        </div>
      </section>
      <field-map></field-map>
    </main>`; }
}
customElements.define('flur-app', FlurApp);
</script>
</body>
</html>
